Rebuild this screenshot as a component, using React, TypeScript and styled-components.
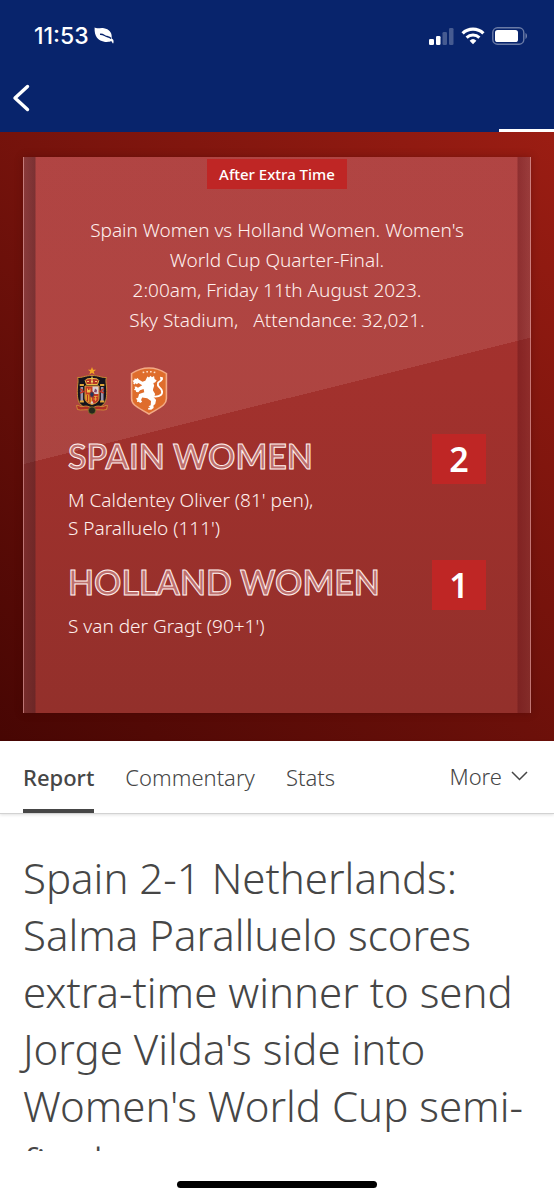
import React from "react";
import styled, { createGlobalStyle } from "styled-components";

const text = `"Noto Sans", "Open Sans", sans-serif`;

const GlobalStyle = createGlobalStyle`
  * { box-sizing: border-box; }
  body { margin: 0; background: #fff; font-family: ${text}; font-weight: 300; color: #464646; }
  h1, h2, p { margin: 0; font-weight: 300; }
  button { border: 0; background: none; padding: 0; font: inherit; color: inherit; cursor: pointer; }
`;

const Screen = styled.div`
  display: flex;
  flex-direction: column;
  height: 100vh;
`;

const Header = styled.header`
  flex: none;
  display: flex;
  flex-direction: column;
  height: 132px;
  background: #08246c;
  color: #fff;
`;

const StatusBar = styled.div`
  display: flex;
  justify-content: space-between;
  align-items: center;
  padding: 22px 26px 0 34px;
`;

const StatusGroup = styled.div`
  display: flex;
  align-items: center;
  gap: 7px;
`;

const Clock = styled.time`
  margin-right: -2px;
  font: 500 23px/28px Inter, sans-serif;
`;

const BackButton = styled.button`
  display: flex;
  align-self: flex-start;
  margin: 34px 0 0 12px;
`;

const Progress = styled.div`
  width: 10%;
  height: 3px;
  margin: auto 0 0 auto;
  background: #fff;
`;

const Hero = styled.section`
  flex: none;
  padding: 25px 23px 28px;
  background: linear-gradient(42deg, #470603, #9b1d13);
`;

const Card = styled.div`
  display: flex;
  flex-direction: column;
  align-items: center;
  min-height: 556px;
  padding: 2px 44px 52px;
  color: #fff0ee;
  border: solid rgba(255, 190, 190, 0.5);
  border-width: 0 1px;
  background:
    linear-gradient(to right, rgba(70, 40, 45, 0.35), rgba(70, 30, 35, 0.5) 12px, transparent 13px),
    linear-gradient(to left, rgba(70, 30, 35, 0.2), rgba(90, 15, 20, 0.4) 13px, transparent 14px),
    linear-gradient(166deg, rgba(255, 200, 200, 0.13) 45%, transparent 45%),
    linear-gradient(#a5312f, #a2312d 40%, #93302b);
  background-origin: border-box;
  box-shadow: 0 0 8px rgba(50, 0, 0, 0.3);
`;

const Badge = styled.p`
  padding: 0 12px;
  background: #bf2625;
  color: #fff;
  font-size: 15px;
  font-weight: 500;
  line-height: 30px;
`;

const Info = styled.p`
  margin-top: 26px;
  font-size: 19px;
  line-height: 30px;
  text-align: center;
  white-space: pre-line;
`;

const Crests = styled.div`
  display: flex;
  align-self: flex-start;
  gap: 21px;
  margin: 32px 0 19px 7px;
`;

const Team = styled.div`
  display: grid;
  grid-template-columns: 1fr 54px;
  align-self: stretch;
  margin-bottom: 18px;
`;

const TeamName = styled.h2`
  font: 600 34px/44px Lato, sans-serif;
  color: #bd6f6d;
  -webkit-text-stroke: 1px #fff0ee;
  text-transform: uppercase;
  white-space: nowrap;
`;

const Score = styled.span`
  background: #bf2625;
  color: #fff;
  font-size: 34px;
  font-weight: 600;
  line-height: 50px;
  text-align: center;
`;

const Scorers = styled.p`
  grid-column: 1 / -1;
  margin-top: 2px;
  font-size: 19px;
  line-height: 28px;
  white-space: pre-line;
`;

const Tabs = styled.nav`
  flex: none;
  display: flex;
  gap: 31px;
  height: 73px;
  padding: 0 26px 0 23px;
  border-bottom: 1px solid #d2d2d2;
  box-shadow: 0 1px 3px rgba(0, 0, 0, 0.12);
`;

const Tab = styled.button<{ $active?: boolean }>`
  padding: 3px 0 0;
  border-bottom: 4px solid ${(p) => (p.$active ? "#464646" : "transparent")};
  font-size: 22px;
  font-weight: ${(p) => (p.$active ? 500 : 300)};
`;

const More = styled.button`
  display: flex;
  align-items: center;
  gap: 9px;
  margin-left: auto;
  padding-bottom: 2px;
  font-size: 22px;
`;

const Article = styled.main`
  flex: 1;
  min-height: 0;
  padding: 35px 23px 0;
  overflow: hidden;
`;

const Headline = styled.h1`
  font-size: 42px;
  line-height: 57px;
`;

const Footer = styled.footer`
  flex: none;
  height: 49px;
  padding-top: 30px;
`;

const HomeBar = styled.div`
  width: 36%;
  height: 7px;
  margin: 0 auto;
  border-radius: 4px;
  background: #000;
`;

const Leaf = () => (
  <svg width="20" height="18" viewBox="0 0 20 18" aria-hidden="true">
    <path d="M.6.6C3 2.200 6 .6 10 1.200c5 .7 8 4.300 7.700 8.600-.1 1.200.3 2.200 1.300 2.800.7.500.8 3.700.1 4-.6.200-.8-1.900-2-2.500-1.300.8-3.600 1.100-6 .8C4 14.100.2 9.800.6.600z" fill="#fff" />
    <path d="M6 7.300c3.500-.4 4.500 1.700 7 2.200 1.700.4 3 .8 4.200 2" fill="none" stroke="#08246c" strokeWidth="1.300" />
  </svg>
);

const Signal = () => (
  <svg width="25" height="17" viewBox="0 0 25 17" fill="#fff" aria-hidden="true">
    <rect x="0" y="11" width="5" height="6" rx="1.300" />
    <rect x="7" y="8" width="4.500" height="9" rx="1.300" />
    <rect x="13.500" y="4" width="4.500" height="13" rx="1.300" opacity=".25" />
    <rect x="20" y="0" width="4.500" height="17" rx="1.300" opacity=".25" />
  </svg>
);

const Wifi = () => (
  <svg width="24" height="18" viewBox="0 0 24 18" fill="none" stroke="#fff" aria-hidden="true">
    <path d="M1.600 6.400a15 15 0 0 1 20.800 0" strokeWidth="3.300" />
    <path d="M5.600 10.600a9.200 9.200 0 0 1 12.800 0" strokeWidth="3" />
    <path d="M8.600 13.700a5 5 0 0 1 6.800 0L12 17.200z" fill="#fff" stroke="none" />
  </svg>
);

const Battery = () => (
  <svg width="36" height="18" viewBox="0 0 36 18" aria-hidden="true">
    <rect x=".8" y=".8" width="31" height="16.400" rx="4.800" fill="none" stroke="#fff" strokeOpacity=".4" strokeWidth="1.400" />
    <rect x="3" y="3" width="23" height="12" rx="2.600" fill="#fff" />
    <path d="M33.500 6c1.900.6 1.900 5.200 0 6z" fill="#fff" opacity=".45" />
  </svg>
);

const SpainCrest = () => (
  <svg width="34" height="48" viewBox="0 0 34 48" role="img" aria-label="Spain">
    <path d="M17 0l1.100 2.700 3 .1-2.400 1.800.9 2.900-2.600-1.700-2.600 1.700.9-2.900-2.400-1.800 3-.1z" fill="#f5a623" />
    <path d="M2.500 10.500C7 11 10 8.500 17 8.500s10 2.500 14.500 2c-1.500 4 .4 7 .2 14 0 8-1.200 12-5.200 14.500L17 43l-9.500-4C3.500 36.500 2.300 32.500 2.300 24.500c-.2-7 1.700-10 .2-14z" fill="#15131c" stroke="#c98a34" strokeWidth="1" />
    <path d="M11.500 17.500l-1.300-4c1.500-2.500 4-1.500 6.800-2.200 2.800.7 5.300-.3 6.800 2.200l-1.300 4z" fill="#b73626" stroke="#eebb45" strokeWidth="1" />
    <path d="M12 14.500h2m2 0h2m2 0h2M17 9.500v7" stroke="#f3cf69" strokeWidth="1.200" />
    <path d="M10 19h14v12c0 4-3.500 5.500-7 6.500-3.500-1-7-2.500-7-6.500z" fill="#c33827" stroke="#d9a23c" />
    <path d="M17.500 19.500H23.500V27h-6z" fill="#d9d0d3" />
    <path d="M10.500 27.500H17v9c-3.500-1-6.500-2.500-6.500-5.500z" fill="#e1a52e" />
    <path d="M12.500 28v6m2.500-6v7.500" stroke="#b8301f" strokeWidth="1.100" />
    <path d="M12 25.500v-4h1v1.500h1.500v-1.500h1v4z" fill="#f0c34a" />
    <path d="M19 25l1-3.500 2 1.500-.5 2.500z" fill="#80496a" />
    <path d="M18.500 29.500h4m-4 2.500h3.500m-1.500-3v5" stroke="#ecb13b" strokeWidth=".8" />
    <ellipse cx="17" cy="27.500" rx="2.100" ry="2.700" fill="#26375c" stroke="#a83328" strokeWidth=".8" />
    <path d="M15.300 36.800L17 33.500l1.700 3.300z" fill="#ddd5c8" />
    <path d="M5.500 20h2.600v14H5.500zM25.900 20h2.600v14h-2.600z" fill="#9a93ad" />
    <path d="M4.700 18h4.200m16.200 0h4.200M4.700 34.500h4.200m16.200 0h4.200" stroke="#dfa53a" strokeWidth="2.200" />
    <path d="M5 26l5-2m14 0l5 2M5 22l3 1.500m21-1.500l-3 1.500" stroke="#bd3528" strokeWidth="1.600" />
    <path d="M1.500 38.500c2-1 3.500 2 6.500 1s5-.5 9 1.500c4-2 6-2.500 9-1.500s4.500-2 6.500-1l-1 4c-4 1.500-8-1-14.500 1-6.500-2-10.500.5-14.500-1z" fill="#ae2f25" stroke="#d69837" strokeWidth=".8" />
    <circle cx="17" cy="43.500" r="3.700" fill="#25291d" stroke="#92752e" strokeWidth=".8" />
  </svg>
);

const NetherlandsCrest = () => (
  <svg width="38" height="48" viewBox="0 0 36 48" preserveAspectRatio="none" role="img" aria-label="Netherlands">
    <path d="M18 1c6 0 11.500 2 16.500 5.500v25C34.500 38 29 40 18 47 7 40 1.500 38 1.500 31.500v-25C6.500 3 12 1 18 1z" fill="#df6d2c" stroke="#f3aa85" strokeWidth="1.500" />
    <path d="M12 5.600l1.500-.4m2-.4l1.500-.1m2 0l1.500.1m2 .4l1.500.4" stroke="#ffe1cc" strokeWidth="1.600" />
    <path d="M16.500 9.500l1.500 1 1.500-1.700 1.300 1.500 2-1.200.5 2.800 2 1.600-1.600 1.900-1.600.5.800 2.800c-.5 2-1.200 3-1.100 4.700l2 3.700-1.300 3.200 2.200 2.800-.8 4-1.700 1.400.2 2.500-2.300 1.800-3-.3.200-1.500 1.900-.5-1.700-1.300 2.100-1 .3-4.200-3.600-2.800-4.800-.6-1 2.300 1 1.900-2 1.200-1.100-1.200-1.800.3.300-2.100-1.400-1.300 2.200-1.200.9-3.400 4.900-1.800-.6-3.200-3.400 1.100-1.600 2-2-.3-.5-1.600-1.700-.4 1.100-1.700-.5-1.600 2 .1 1.200 1.100 4.100-2.500-3.600-2.300-1.500 1.300-1.400-1-.6 1.300-1.400-.8.400-1.600-1.200-1.500 1.800-.6.200-1.600 1.700.5 1.200-1 1.100 1.600 3.500 2.100 2.700-.9z" fill="#fff" />
    <path d="M23 29.500c5.500.5 8.500-2.400 7-6.500-1-2.600-4.600-3.300-3.600-6.700.7-2.600 4.300-1.700 3.300-4.800" fill="none" stroke="#fff" strokeWidth="1.800" strokeLinecap="round" />
    <path d="M28.500 10.500l2 .5-.3 2" fill="none" stroke="#fff" strokeWidth="1.400" />
  </svg>
);

const teams = [
  { name: "Spain Women", score: 2, scorers: "M Caldentey Oliver (81' pen),\nS Paralluelo (111')" },
  { name: "Holland Women", score: 1, scorers: "S van der Gragt (90+1')" },
];

export default function App() {
  return (
    <Screen>
      <GlobalStyle />
      <Header>
        <StatusBar>
          <StatusGroup>
            <Clock>11:53</Clock>
            <Leaf />
          </StatusGroup>
          <StatusGroup>
            <Signal />
            <Wifi />
            <Battery />
          </StatusGroup>
        </StatusBar>
        <BackButton aria-label="Back">
          <svg width="18" height="28" viewBox="0 0 18 28" fill="none" stroke="#fff" strokeWidth="3.400" strokeLinecap="round" strokeLinejoin="round">
            <path d="M15.500 2.500L3 14l12.500 11.500" />
          </svg>
        </BackButton>
        <Progress />
      </Header>
      <Hero>
        <Card>
          <Badge>After Extra Time</Badge>
          <Info>
            {"Spain Women vs Holland Women. Women's\nWorld Cup Quarter-Final.\n2:00am, Friday 11th August 2023.\nSky Stadium,\u00a0\u00a0 Attendance: 32,021."}
          </Info>
          <Crests>
            <SpainCrest />
            <NetherlandsCrest />
          </Crests>
          {teams.map((team) => (
            <Team key={team.name}>
              <TeamName>{team.name}</TeamName>
              <Score>{team.score}</Score>
              <Scorers>{team.scorers}</Scorers>
            </Team>
          ))}
        </Card>
      </Hero>
      <Tabs>
        <Tab $active>Report</Tab>
        <Tab>Commentary</Tab>
        <Tab>Stats</Tab>
        <More>
          More
          <svg width="17" height="10" viewBox="0 0 17 10" fill="none" stroke="#464646" strokeWidth="1.500">
            <path d="M1 1l7.500 7.500L16 1" />
          </svg>
        </More>
      </Tabs>
      <Article>
        <Headline>
          Spain 2-1 Netherlands: Salma Paralluelo scores extra-time winner to send Jorge Vilda's side into
          Women's World Cup semi-finals
        </Headline>
      </Article>
      <Footer>
        <HomeBar />
      </Footer>
    </Screen>
  );
}
